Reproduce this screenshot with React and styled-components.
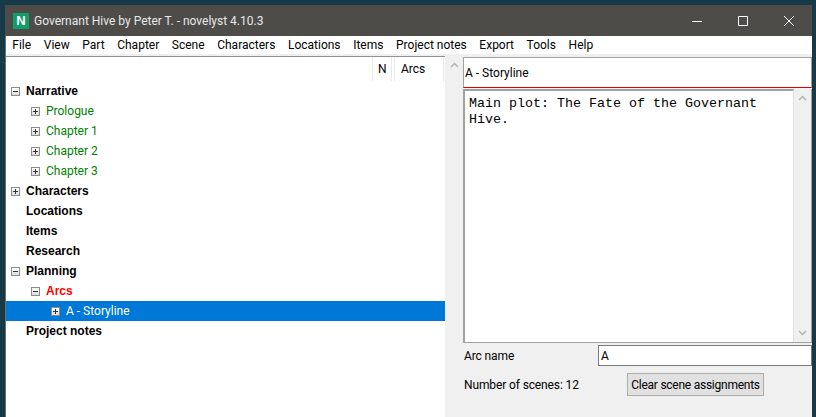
import styled, { createGlobalStyle } from "styled-components";

const Global = createGlobalStyle`
  html, body { margin: 0; padding: 0; background: #163a47; overflow: hidden; }
  * { box-sizing: border-box; }
`;

const Desktop = styled.div`
  width: 816px;
  height: 417px;
  padding: 5px 4px 0 5px;
  display: flex;
  overflow: hidden;
`;

const Window = styled.div`
  flex: 1;
  display: flex;
  flex-direction: column;
  background: #f0f0f0;
  border-left: 1px solid #6e6e6e;
  font-family: Roboto, "Open Sans", sans-serif;
  font-size: 12px;
  color: #000;
`;

const TitleBar = styled.div`
  height: 31px;
  flex: none;
  display: flex;
  align-items: center;
  padding-left: 8px;
  margin-left: -1px;
  background: #4d4c49;
  color: #e8e8e8;
`;

const AppIcon = styled.div`
  width: 16px;
  height: 16px;
  background: #0f9d6a;
  color: #fff;
  font: bold 13px/16px "Liberation Sans", sans-serif;
  text-align: center;
`;

const Title = styled.span`
  margin-left: 5px;
  flex: 1;
`;

const WinButton = styled.div`
  width: 46px;
  height: 31px;
  display: flex;
  align-items: center;
  justify-content: center;
`;

const MenuBar = styled.div`
  height: 18px;
  flex: none;
  display: flex;
  align-items: center;
  background: #fff;
`;

const MenuItem = styled.span`
  padding: 0 6.3px 0 6.3px;
  white-space: nowrap;
`;

const Panes = styled.div`
  flex: 1;
  display: flex;
  min-height: 0;
  padding-top: 2px;
`;

const TreeSide = styled.div`
  width: 439px;
  flex: none;
  display: flex;
  flex-direction: column;
  background: #fff;
  border-top: 1px solid #8f8f94;
`;

const Header = styled.div`
  height: 24px;
  flex: none;
  display: flex;
  justify-content: flex-end;
  margin-right: 1px;
`;

const HeaderCell = styled.div`
  width: ${(p) => p.$w}px;
  border-left: 1px solid #eaeaea;
  border-right: 1px solid #eaeaea;
  margin-left: 2px;
  padding-left: ${(p) => p.$pad}px;
  line-height: 24px;
`;

const Tree = styled.div`
  padding-top: 0;
`;

const Row = styled.div`
  height: 20px;
  display: flex;
  align-items: center;
  padding-left: ${(p) => 5 + p.$level * 20}px;
  background: ${(p) => (p.$selected ? "#0078d7" : "transparent")};
  color: ${(p) => p.$color || "#000"};
  font-family: ${(p) => (p.$bold ? '"Liberation Sans", sans-serif' : "inherit")};
  font-weight: ${(p) => (p.$bold ? 700 : 400)};
`;

const Toggle = styled.span`
  width: 9px;
  height: 9px;
  flex: none;
  margin-right: 6px;
  border: 1px solid #8c8c8c;
  background: linear-gradient(#fff, #dcdcdc);
  position: relative;
  &::before {
    content: "";
    position: absolute;
    left: 1px;
    top: 3px;
    width: 5px;
    height: 1px;
    background: #333;
  }
  &::after {
    content: "";
    display: ${(p) => (p.$open ? "none" : "block")};
    position: absolute;
    left: 3px;
    top: 1px;
    width: 1px;
    height: 5px;
    background: #333;
  }
`;

const NoToggle = styled.span`
  width: 15px;
  flex: none;
`;

const Scroll = styled.div`
  width: ${(p) => p.$w || 18}px;
  flex: none;
  background: #f0f0f0;
  display: flex;
  flex-direction: column;
  justify-content: space-between;
  align-items: center;
  padding: 6px 0 6px;
  color: #b4b4b4;
`;

const Editor = styled.div`
  flex: 1;
  min-width: 0;
  display: flex;
  flex-direction: column;
  padding-top: 1px;
`;

const TitleField = styled.div`
  height: 31px;
  flex: none;
  background: #fff;
  border: 1px solid #a0a0a0;
  border-bottom: 1px solid #e00000;
  padding-left: 1px;
  line-height: 30px;
`;

const NotesBox = styled.div`
  height: 254px;
  flex: none;
  display: flex;
  background: #fff;
  border-bottom: 1px solid #a0a0a0;
  border-right: 1px solid #a0a0a0;
  margin-top: 1px;
`;

const Notes = styled.div`
  flex: 1;
  border-left: 2px solid #a0a0a0;
  border-top: 2px solid #a0a0a0;
  border-right: 1px solid #e0e0e0;
  padding: 5px 4px;
  font: 13.33px/16px "Liberation Mono", monospace;
`;

const FormRow = styled.div`
  display: flex;
  align-items: center;
  height: ${(p) => p.$h}px;
  margin-top: ${(p) => p.$top}px;
  padding-left: 1px;
`;

const Label = styled.span`
  width: 134px;
  flex: none;
  white-space: nowrap;
  letter-spacing: -0.12px;
`;

const Input = styled.div`
  flex: 1;
  height: 21px;
  background: #fff;
  border: 1px solid #7a7a7a;
  padding-left: 2px;
  line-height: 20px;
`;

const Button = styled.button`
  width: 137px;
  height: 23px;
  padding: 0;
  margin-left: 29px;
  background: #e1e1e1;
  border: 1px solid #adadad;
  font: inherit;
  color: inherit;
  letter-spacing: -0.25px;
  white-space: nowrap;
`;

const Up = () => (
  <svg width="9" height="6" viewBox="0 0 9 6" fill="none" stroke="currentColor" strokeWidth="1.5">
    <path d="M1 5l3.5-3.5L8 5" />
  </svg>
);

const Down = () => (
  <svg width="9" height="6" viewBox="0 0 9 6" fill="none" stroke="currentColor" strokeWidth="1.5">
    <path d="M1 1l3.5 3.5L8 1" />
  </svg>
);

const menus = ["File", "View", "Part", "Chapter", "Scene", "Characters", "Locations", "Items", "Project notes", "Export", "Tools", "Help"];

const rows = [
  { label: "Narrative", level: 0, toggle: "open", bold: true },
  { label: "Prologue", level: 1, toggle: "closed", color: "#008000" },
  { label: "Chapter 1", level: 1, toggle: "closed", color: "#008000" },
  { label: "Chapter 2", level: 1, toggle: "closed", color: "#008000" },
  { label: "Chapter 3", level: 1, toggle: "closed", color: "#008000" },
  { label: "Characters", level: 0, toggle: "closed", bold: true },
  { label: "Locations", level: 0, bold: true },
  { label: "Items", level: 0, bold: true },
  { label: "Research", level: 0, bold: true },
  { label: "Planning", level: 0, toggle: "open", bold: true },
  { label: "Arcs", level: 1, toggle: "open", bold: true, color: "#ff0000" },
  { label: "A - Storyline", level: 2, toggle: "closed", selected: true, color: "#fff" },
  { label: "Project notes", level: 0, bold: true },
];

export default function App() {
  return (
    <Desktop>
      <Global />
      <Window>
        <TitleBar>
          <AppIcon>N</AppIcon>
          <Title>Governant Hive by Peter T. - novelyst 4.10.3</Title>
          <WinButton>
            <svg width="10" height="10" viewBox="0 0 10 10" stroke="#fff"><path d="M0 5.5h10" /></svg>
          </WinButton>
          <WinButton>
            <svg width="10" height="10" viewBox="0 0 10 10" fill="none" stroke="#fff"><path d="M.5.5h9v9h-9z" /></svg>
          </WinButton>
          <WinButton>
            <svg width="10" height="10" viewBox="0 0 10 10" stroke="#fff"><path d="M0 0l10 10M10 0L0 10" /></svg>
          </WinButton>
        </TitleBar>
        <MenuBar>
          {menus.map((m) => (
            <MenuItem key={m}>{m}</MenuItem>
          ))}
        </MenuBar>
        <Panes>
          <TreeSide>
            <Header>
              <HeaderCell $w={20} $pad={5}>N</HeaderCell>
              <HeaderCell $w={50} $pad={6}>Arcs</HeaderCell>
            </Header>
            <Tree>
              {rows.map((r) => (
                <Row key={r.label} $level={r.level} $bold={r.bold} $color={r.color} $selected={r.selected}>
                  {r.toggle ? <Toggle $open={r.toggle === "open"} /> : <NoToggle />}
                  {r.label}
                </Row>
              ))}
            </Tree>
          </TreeSide>
          <Scroll>
            <Up />
          </Scroll>
          <Editor>
            <TitleField>A - Storyline</TitleField>
            <NotesBox>
              <Notes>Main plot: The Fate of the Governant Hive.</Notes>
              <Scroll $w={17}>
                <Up />
                <Down />
              </Scroll>
            </NotesBox>
            <FormRow $h={21} $top={2}>
              <Label>Arc name</Label>
              <Input>A</Input>
            </FormRow>
            <FormRow $h={23} $top={7}>
              <Label>Number of scenes: 12</Label>
              <Button>Clear scene assignments</Button>
            </FormRow>
          </Editor>
        </Panes>
      </Window>
    </Desktop>
  );
}
